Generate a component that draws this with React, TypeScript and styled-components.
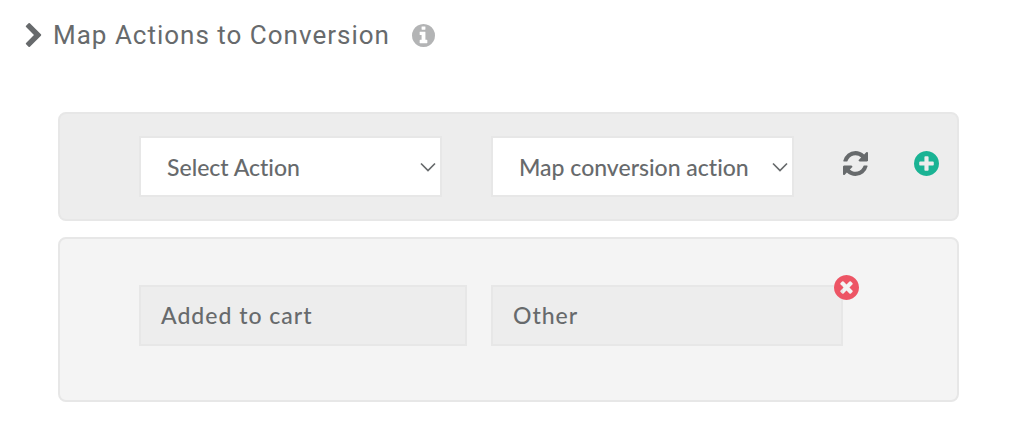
import React from 'react';
import styled, { createGlobalStyle } from 'styled-components';

const GlobalStyle = createGlobalStyle`
  *, *::before, *::after { box-sizing: border-box; }
  body {
    margin: 0;
    background: #fff;
    color: #676a6c;
    font-family: Lato, "Liberation Sans", sans-serif;
    font-size: 23px;
    font-weight: 500;
    font-variant-ligatures: none;
  }
`;

const Section = styled.section`
  padding: 16px 65px 24px 25px;
`;

const Header = styled.header`
  display: flex;
  align-items: center;
  height: 38px;
`;

const Title = styled.h2`
  margin: 0 22px 0 11px;
  font-family: Roboto, "Liberation Sans", sans-serif;
  font-size: 26px;
  font-weight: 400;
  line-height: 38px;
  letter-spacing: 1px;
  white-space: nowrap;
`;

const Icon = styled.svg<{ $width: number; $height: number }>`
  display: block;
  flex: none;
  width: ${(p) => p.$width}px;
  height: ${(p) => p.$height}px;
  fill: currentColor;
`;

const IconButton = styled.button<{ $color?: string }>`
  display: block;
  flex: none;
  padding: 0;
  border: 0;
  background: none;
  color: ${(p) => p.$color ?? 'inherit'};
  cursor: pointer;
`;

const Panels = styled.div`
  display: flex;
  flex-direction: column;
  gap: 16px;
  margin: 58px 0 0 33px;
`;

const Panel = styled.div<{ $muted?: boolean }>`
  display: flex;
  align-items: flex-start;
  padding: ${(p) => (p.$muted ? '46px 114px 54px 79px' : '22px 18px 22px 79px')};
  border: 2px solid #e7e7e7;
  border-radius: 8px;
  background: ${(p) => (p.$muted ? '#f4f4f4' : '#ededed')};
`;

const Selects = styled.div`
  display: grid;
  flex: 1;
  grid-template-columns: 1fr 1fr;
  gap: 49px;
`;

const SelectBox = styled.div`
  position: relative;
`;

const Select = styled.select`
  appearance: none;
  display: block;
  width: 100%;
  height: 61px;
  padding: 0 32px 0 26px;
  border: 2px solid #e7e7e7;
  border-radius: 0;
  background: #fff;
  color: inherit;
  font: inherit;
  font-variant-ligatures: none;
`;

const Arrow = styled.svg`
  position: absolute;
  top: 25px;
  right: 6px;
  width: 16px;
  height: 12px;
  fill: none;
  stroke: currentColor;
  stroke-width: 1.7;
  pointer-events: none;
`;

const Actions = styled.div`
  display: flex;
  gap: 46px;
  margin: 15px 0 0 49px;
`;

const Mapping = styled.div`
  display: grid;
  flex: 1;
  grid-template-columns: 328fr 352fr;
  gap: 24px;
`;

const MappedValue = styled.div`
  position: relative;
  height: 61px;
  padding: 0 20px;
  border: 2px solid #e7e7e7;
  background: #ededed;
  line-height: 57px;
  letter-spacing: 1px;
`;

const RemoveSlot = styled.div`
  position: absolute;
  top: -12px;
  right: -18px;
`;

const CIRCLE =
  'M1664 896q0 209-103 385.5t-279.5 279.5-385.5 103-385.5-103-279.5-279.5-103-385.5 103-385.5 279.5-279.5 385.5-103 385.5 103 279.5 279.5 103 385.5z';
const INFO =
  'M1152 1376v-160q0-14-9-23t-23-9h-96v-512q0-14-9-23t-23-9h-320q-14 0-23 9t-9 23v160q0 14 9 23t23 9h96v320h-96q-14 0-23 9t-9 23v160q0 14 9 23t23 9h448q14 0 23-9t9-23zM1024 480v-160q0-14-9-23t-23-9h-192q-14 0-23 9t-9 23v160q0 14 9 23t23 9h192q14 0 23-9t9-23z';
const PLUS =
  'M1344 960v-128q0-26-19-45t-45-19h-256v-256q0-26-19-45t-45-19h-128q-26 0-45 19t-19 45v256h-256q-26 0-45 19t-19 45v128q0 26 19 45t45 19h256v256q0 26 19 45t45 19h128q26 0 45-19t19-45v-256h256q26 0 45-19t19-45z';
const TIMES =
  'M1277 1122q0-26-19-45l-181-181 181-181q19-19 19-45 0-27-19-46l-90-90q-19-19-46-19-26 0-45 19l-181 181-181-181q-19-19-45-19-27 0-46 19l-90 90q-19 19-19 46 0 26 19 45l181 181-181 181q-19 19-19 45 0 27 19 46l90 90q19 19 46 19 26 0 45-19l181-181 181 181q19 19 45 19 27 0 46-19l90-90q19-19 19-46z';
const REFRESH =
  'M1511 928q0 5-1 7-64 268-268 434.5T764 1536q-146 0-282.5-55T238 1324l-129 129q-19 19-45 19t-45-19-19-45V960q0-26 19-45t45-19h448q26 0 45 19t19 45-19 45l-137 137q71 66 161 102t187 36q134 0 250-65t186-179q11-17 53-117 8-23 30-23h192q13 0 22.5 9.5t9.5 22.5zm25-800v448q0 26-19 45t-45 19h-448q-26 0-45-19t-19-45 19-45l138-138Q969 256 768 256q-134 0-250 65T332 500q-11 17-53 117-8 23-30 23H50q-13 0-22.5-9.5T18 608v-7q65-268 270-434.5T768 0q146 0 284 55.5T1297 212l130-129q19-19 45-19t45 19 19 45z';
const CHEVRON =
  'M1363 941l-742 742q-19 19-45 19t-45-19l-166-166q-19-19-19-45t19-45l531-531-531-531q-19-19-19-45t19-45l166-166q19-19 45-19t45 19l742 742q19 19 19 45t-19 45z';

function CircleIcon({ glyph, size }: { glyph: string; size: number }) {
  return (
    <Icon $width={size} $height={size} viewBox="128 128 1536 1536" aria-hidden="true">
      <path fillRule="evenodd" d={CIRCLE + glyph} />
    </Icon>
  );
}

function SelectField({ label }: { label: string }) {
  return (
    <SelectBox>
      <Select aria-label={label} defaultValue="">
        <option value="">{label}</option>
      </Select>
      <Arrow viewBox="0 0 16 12" aria-hidden="true">
        <path d="M1 2.5 8 9.5 15 2.5" />
      </Arrow>
    </SelectBox>
  );
}

export default function App() {
  return (
    <>
      <GlobalStyle />
      <Section>
        <Header>
          <IconButton type="button" aria-label="Toggle section">
            <Icon $width={17} $height={24} viewBox="346 90 1036 1612" aria-hidden="true">
              <path d={CHEVRON} />
            </Icon>
          </IconButton>
          <Title>Map Actions to Conversion</Title>
          <IconButton type="button" aria-label="More information" $color="#b3b4b5">
            <CircleIcon glyph={INFO} size={23} />
          </IconButton>
        </Header>
        <Panels>
          <Panel>
            <Selects>
              <SelectField label="Select Action" />
              <SelectField label="Map conversion action" />
            </Selects>
            <Actions>
              <IconButton type="button" aria-label="Refresh">
                <Icon $width={25} $height={25} viewBox="0 0 1536 1536" aria-hidden="true">
                  <path d={REFRESH} />
                </Icon>
              </IconButton>
              <IconButton type="button" aria-label="Add mapping" $color="#1ab394">
                <CircleIcon glyph={PLUS} size={25} />
              </IconButton>
            </Actions>
          </Panel>
          <Panel $muted>
            <Mapping>
              <MappedValue>Added to cart</MappedValue>
              <MappedValue>
                Other
                <RemoveSlot>
                  <IconButton type="button" aria-label="Remove mapping" $color="#ed5565">
                    <CircleIcon glyph={TIMES} size={25} />
                  </IconButton>
                </RemoveSlot>
              </MappedValue>
            </Mapping>
          </Panel>
        </Panels>
      </Section>
    </>
  );
}
